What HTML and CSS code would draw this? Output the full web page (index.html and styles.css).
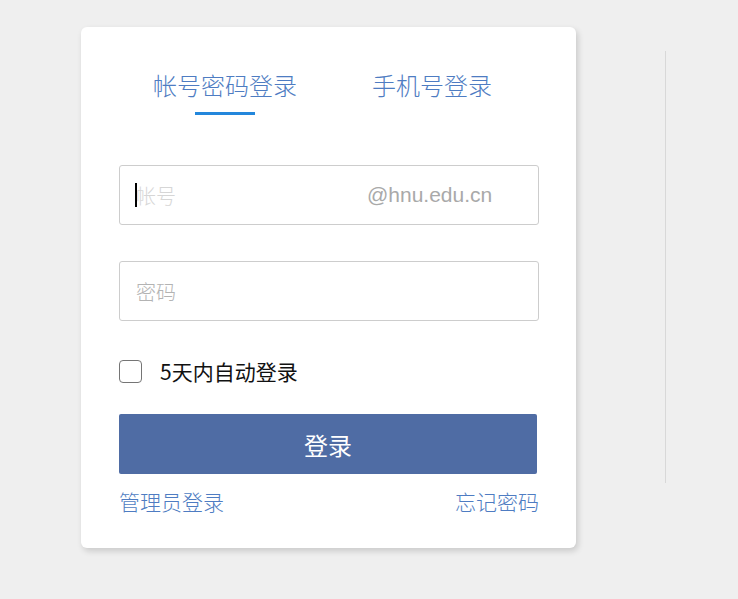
FILE: index.html
```html
<!DOCTYPE html>
<html lang="zh-CN">
<head>
<meta charset="utf-8">
<title>登录</title>
<link rel="stylesheet" href="styles.css">
</head>
<body>
<div class="page">
  <div class="card">
    <div class="tabs">
      <div class="tab tab-active">
        <span class="tab-label">帐号密码登录</span>
        <span class="tab-bar"></span>
      </div>
      <div class="tab tab-second">
        <span class="tab-label">手机号登录</span>
      </div>
    </div>
    <form class="form">
      <div class="field">
        <input class="input input-account" type="text" placeholder="帐号">
        <span class="caret"></span>
        <span class="suffix">@hnu.edu.cn</span>
      </div>
      <div class="field field-pwd">
        <input class="input input-pwd" type="password" placeholder="密码">
      </div>
      <label class="remember">
        <input class="check" type="checkbox">
        <span class="remember-text">5天内自动登录</span>
      </label>
      <button class="submit" type="button">登录</button>
      <div class="links">
        <a class="link" href="#">管理员登录</a>
        <a class="link" href="#">忘记密码</a>
      </div>
    </form>
  </div>
  <div class="divider"></div>
</div>
</body>
</html>
```

FILE: styles.css
```css
* { box-sizing: border-box; }
html, body {
  margin: 0;
  padding: 0;
  background: #efefef;
  font-family: "Noto Sans CJK SC", "Liberation Sans", sans-serif;
  font-weight: 300;
}
.page {
  display: flex;
  align-items: flex-start;
  height: 599px;
}
.card {
  margin-left: 81px;
  margin-top: 27px;
  width: 495px;
  height: 521px;
  background: #fff;
  border-radius: 6px;
  box-shadow: 2px 3px 6px rgba(0, 0, 0, 0.16);
  padding: 43px 37px 0 38px;
}
.tabs {
  display: grid;
  grid-template-columns: 212px 202px;
}
.tab {
  display: flex;
  flex-direction: column;
  align-items: center;
}
.tab-label {
  font-size: 24px;
  line-height: 30px;
  color: #4e7cc2;
  white-space: nowrap;
}
.tab-bar {
  display: block;
  margin-top: 12px;
  width: 60px;
  height: 3px;
  background: #2387dc;
}
.form {
  display: flex;
  flex-direction: column;
  margin-top: 50px;
}
.field {
  position: relative;
  height: 60px;
}
.field-pwd { margin-top: 36px; }
.input {
  width: 420px;
  height: 60px;
  border: 1px solid #cdcdcd;
  border-radius: 3px;
  padding: 0 16px;
  font-family: "Noto Sans CJK SC", "Liberation Sans", sans-serif;
  font-weight: 300;
  font-size: 20px;
  color: #333;
  outline: none;
  background: #fff;
}
.input-account::placeholder { color: #d6d6d6; }
.input-pwd::placeholder { color: #b3b3b3; }
.caret {
  position: absolute;
  left: 16px;
  top: 18px;
  width: 2px;
  height: 24px;
  background: #000;
}
.suffix {
  position: absolute;
  left: 248px;
  top: 0;
  line-height: 60px;
  font-family: "Liberation Sans", Arial, sans-serif;
  font-weight: 400;
  font-size: 21px;
  color: #a9a9a9;
}
.remember {
  display: flex;
  align-items: center;
  margin-top: 35px;
  height: 30px;
}
.check {
  appearance: none;
  -webkit-appearance: none;
  margin: 0;
  width: 23px;
  height: 23px;
  border: 1.5px solid #757575;
  border-radius: 4px;
  background: #fff;
}
.remember-text {
  margin-left: 18px;
  font-size: 21px;
  font-weight: 400;
  line-height: 30px;
  color: #111;
}
.submit {
  margin-top: 28px;
  width: 418px;
  height: 60px;
  border: none;
  border-radius: 2px;
  background: #4f6ca4;
  color: #fff;
  font-family: "Noto Sans CJK SC", "Liberation Sans", sans-serif;
  font-weight: 400;
  font-size: 24px;
}
.links {
  display: flex;
  justify-content: space-between;
  margin-top: 13px;
  width: 420px;
}
.link {
  font-size: 21px;
  line-height: 28px;
  color: #4e7cc2;
  text-decoration: none;
}
.divider {
  margin-left: 89px;
  margin-top: 51px;
  width: 1px;
  height: 432px;
  background: #d8d8d8;
}
```
